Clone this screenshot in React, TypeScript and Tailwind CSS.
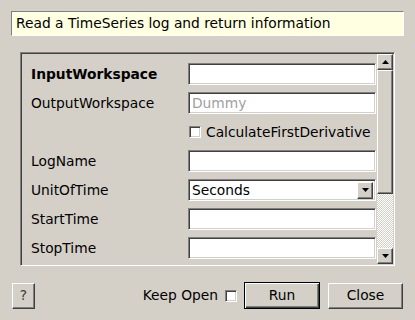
import React from 'react';

const sunken =
  'border border-t-[#808080] border-l-[#808080] border-r-white border-b-white shadow-[inset_1px_1px_0_#404040,inset_-1px_-1px_0_#d4d0c8]';
const raised =
  'border border-t-white border-l-white border-r-[#404040] border-b-[#404040] shadow-[inset_-1px_-1px_0_#808080]';

function Arrow({ up }: { up?: boolean }) {
  return (
    <svg width="7" height="4" viewBox="0 0 7 4">
      {up ? <polygon points="3.5,0 7,4 0,4" fill="#000" /> : <polygon points="0,0 7,0 3.5,4" fill="#000" />}
    </svg>
  );
}

function TextBox({ value, placeholder }: { value?: string; placeholder?: string }) {
  return (
    <div className={`h-[22px] w-[188px] bg-white ${sunken} flex items-center px-[3px]`}>
      {value ? <span>{value}</span> : <span className="text-[#a0a0a0]">{placeholder}</span>}
    </div>
  );
}

function CheckBox() {
  return <div className={`w-[12px] h-[12px] bg-white ${sunken}`} />;
}

export default function App() {
  const rows: { label: string; bold?: boolean; field: React.ReactNode }[] = [
    { label: 'InputWorkspace', bold: true, field: <TextBox /> },
    { label: 'OutputWorkspace', field: <TextBox placeholder="Dummy" /> },
    {
      label: '',
      field: (
        <div className="flex items-center gap-[5px] pl-[1px]">
          <CheckBox />
          <span>CalculateFirstDerivative</span>
        </div>
      ),
    },
    { label: 'LogName', field: <TextBox /> },
    {
      label: 'UnitOfTime',
      field: (
        <div className={`h-[22px] w-[188px] bg-white ${sunken} flex items-center pl-[3px] pr-[2px]`}>
          <span className="flex-1">Seconds</span>
          <div className={`w-[16px] h-[17px] bg-[#d4d0c8] ${raised} flex items-center justify-center`}>
            <Arrow />
          </div>
        </div>
      ),
    },
    { label: 'StartTime', field: <TextBox /> },
    { label: 'StopTime', field: <TextBox /> },
  ];

  return (
    <div className="w-[415px] h-[320px] bg-[#d4d0c8] font-['DejaVu_Sans',sans-serif] text-[13.8px] text-black flex flex-col pt-[11px] px-[11px] overflow-hidden">
      {/* Description */}
      <div className="h-[25px] bg-[#ffffe1] border border-t-[#808080] border-l-[#808080] border-r-white border-b-white flex items-center px-[4px]">
        Read a TimeSeries log and return information
      </div>

      {/* Property scroll area */}
      <div className={`mt-[16px] mx-[9px] h-[214px] flex ${sunken} p-[1px]`}>
        <div className="flex-1 overflow-hidden pl-[9px] pt-[9px]">
          <div className="grid grid-cols-[157px_188px] gap-y-[7px]">
            {rows.map((row, i) => (
              <React.Fragment key={i}>
                <div className={`h-[22px] flex items-center ${row.bold ? 'font-bold' : ''}`}>{row.label}</div>
                <div className="h-[22px] flex items-center">{row.field}</div>
              </React.Fragment>
            ))}
          </div>
        </div>

        {/* Scrollbar */}
        <div className="w-[16px] flex flex-col">
          <div className={`h-[16px] bg-[#d4d0c8] ${raised} flex items-center justify-center`}>
            <Arrow up />
          </div>
          <div className={`h-[124px] bg-[#d4d0c8] ${raised}`} />
          <div className="flex-1 bg-[repeating-conic-gradient(#ffffff_0_25%,#d4d0c8_0_50%)] bg-[length:2px_2px]" />
          <div className={`h-[16px] bg-[#d4d0c8] ${raised} flex items-center justify-center`}>
            <Arrow />
          </div>
        </div>
      </div>

      {/* Buttons */}
      <div className="mt-[16px] flex items-center pl-[1px] pr-[1px]">
        <button className={`w-[23px] h-[26px] bg-[#d4d0c8] ${raised} text-[#404040] flex items-center justify-center`}>?</button>
        <div className="flex-1" />
        <span>Keep Open</span>
        <div className="ml-[7px]">
          <CheckBox />
        </div>
        <button className="ml-[7px] w-[76px] h-[27px] bg-[#d4d0c8] border border-black shadow-[inset_1px_1px_0_#fff,inset_-1px_-1px_0_#404040,inset_-2px_-2px_0_#808080]">
          Run
        </button>
        <button className={`ml-[8px] w-[75px] h-[26px] bg-[#d4d0c8] ${raised}`}>Close</button>
      </div>
    </div>
  );
}
